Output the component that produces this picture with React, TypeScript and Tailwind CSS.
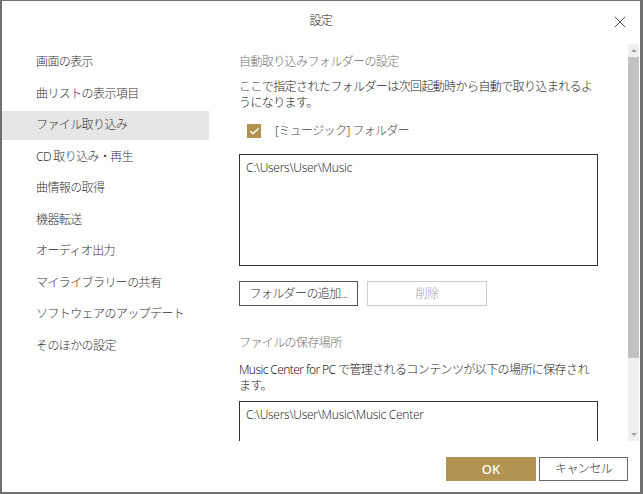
import { Check, X } from 'lucide-react';

const menu = [
    '画面の表示',
    '曲リストの表示項目',
    'ファイル取り込み',
    'CD 取り込み・再生',
    '曲情報の取得',
    '機器転送',
    'オーディオ出力',
    'マイライブラリーの共有',
    'ソフトウェアのアップデート',
    'そのほかの設定',
];

export default function App() {
    return (
        <div className="w-[643px] h-[494px] bg-white border-t border-l-2 border-r-[3px] border-b-2 border-[#707070] flex flex-col text-[12px] tracking-[-0.6px] leading-[16px] font-light text-[#333] font-['Segoe_UI','Noto_Sans','Noto_Sans_CJK_JP',sans-serif]">
            <div className="h-[43px] relative flex items-center justify-center pb-[3px] shrink-0">
                <span className="text-[#222]">設定</span>
                <X className="absolute right-[10px] top-[11px] h-[20px] w-[20px] text-[#555]" strokeWidth={1.2} />
            </div>
            <div className="h-[397px] flex shrink-0">
                <div className="w-[207px] pt-[3.5px] flex flex-col gap-[2.5px] shrink-0">
                    {menu.map((m, i) => (
                        <div key={m} className={`h-[29px] pl-[34px] flex items-center ${i === 2 ? 'bg-[#e6e6e6]' : ''}`}>{m}</div>
                    ))}
                </div>
                <div className="flex-1 overflow-hidden pl-[30px]">
                    <div className="w-[359px] pt-[10px]">
                        <p className="text-[#707070]">自動取り込みフォルダーの設定</p>
                        <p className="mt-[9px] text-[#222]">ここで指定されたフォルダーは次回起動時から自動で取り込まれるよ<br />うになります。</p>
                        <div className="mt-[13px] h-[14px] flex items-center pl-[8px] gap-[14px]">
                            <div className="w-[14px] h-[14px] bg-[#b39350] flex items-center justify-center">
                                <Check className="w-[11px] h-[11px] text-white" strokeWidth={3} />
                            </div>
                            <span className="text-[#444]">[ミュージック] フォルダー</span>
                        </div>
                        <div className="mt-[16px] h-[112px] border border-[#333] pl-[6px] pt-[5px] text-[#333] tracking-[-0.3px]">C:\Users\User\Music</div>
                        <div className="mt-[15px] flex gap-[9px]">
                            <div className="w-[119px] h-[25px] border border-[#555] flex items-center justify-center text-[#333]">フォルダーの追加...</div>
                            <div className="w-[120px] h-[25px] border border-[#cccccc] flex items-center justify-center text-[#a0a0a0]">削除</div>
                        </div>
                        <p className="mt-[29px] text-[#707070]">ファイルの保存場所</p>
                        <p className="mt-[11px] text-[#222]">Music Center for PC で管理されるコンテンツが以下の場所に保存され<br />ます。</p>
                        <div className="mt-[7px] h-[80px] border border-[#333] pl-[6px] pt-[5px] text-[#333] tracking-[-0.3px]">C:\Users\User\Music\Music Center</div>
                    </div>
                </div>
                <div className="w-[11px] mr-[1px] bg-[#f0f0f0] flex flex-col shrink-0">
                    <div className="h-[13px] flex items-center justify-center">
                        <div className="w-0 h-0 border-l-[3px] border-r-[3px] border-b-[3px] border-l-transparent border-r-transparent border-b-[#a0a0a0]" />
                    </div>
                    <div className="h-[301px] bg-[#c2c2c2]" />
                    <div className="flex-1" />
                    <div className="h-[13px] flex items-center justify-center">
                        <div className="w-0 h-0 border-l-[3px] border-r-[3px] border-t-[3px] border-l-transparent border-r-transparent border-t-[#a0a0a0]" />
                    </div>
                </div>
            </div>
            <div className="flex-1 flex justify-end items-start pt-[16px] pr-[12px] gap-[3px]">
                <div className="w-[90px] h-[24px] bg-[#b39350] text-white flex items-center justify-center text-[13px] font-medium tracking-normal">OK</div>
                <div className="w-[89px] h-[24px] border border-[#666] flex items-center justify-center text-[#333]">キャンセル</div>
            </div>
        </div>
    );
}
